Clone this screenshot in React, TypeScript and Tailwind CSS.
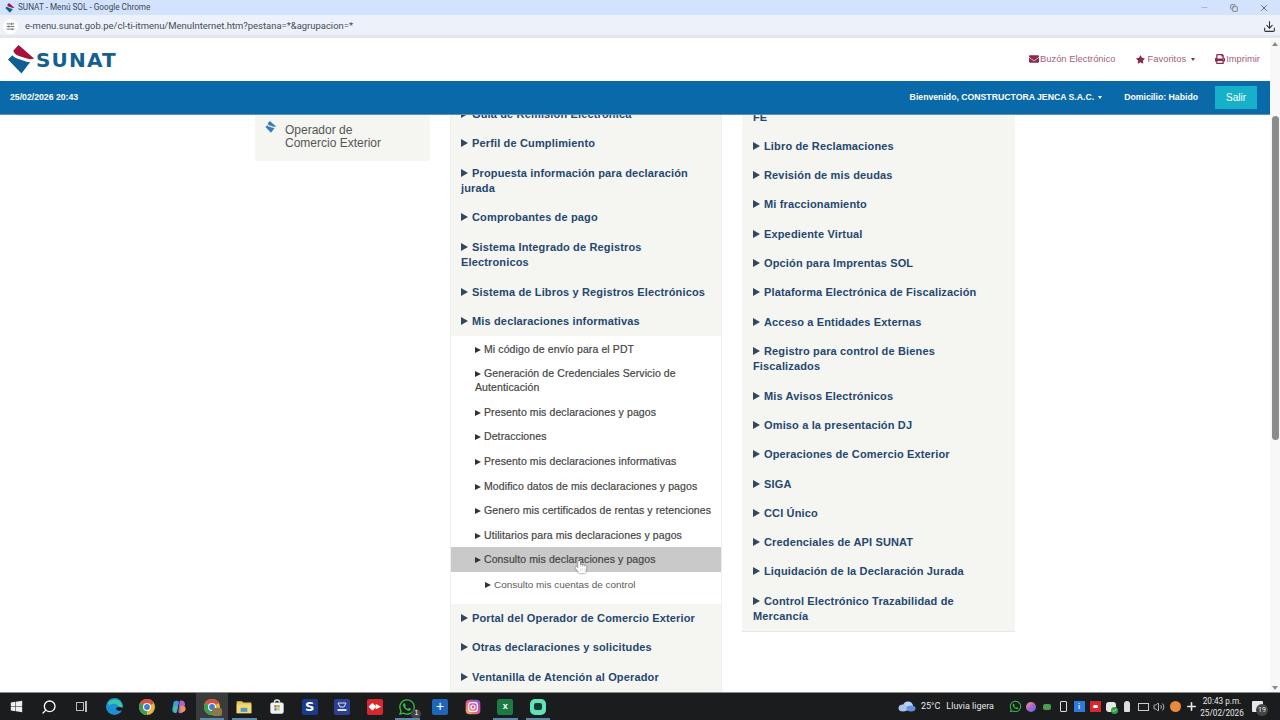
import { ReactNode } from "react";
import { FaWindows, FaWhatsapp, FaEnvelope, FaStar, FaPrint, FaHandPointer } from "react-icons/fa";
import { Search, Download, X, Minus, Copy, SlidersHorizontal, Plus, Volume2, Check } from "lucide-react";

const middleTop = [
  "Perfil de Cumplimiento",
  "Propuesta información para declaración jurada",
  "Comprobantes de pago",
  "Sistema Integrado de Registros Electronicos",
  "Sistema de Libros y Registros Electrónicos",
];

const subItems = [
  "Mi código de envío para el PDT",
  "Generación de Credenciales Servicio de Autenticación",
  "Presento mis declaraciones y pagos",
  "Detracciones",
  "Presento mis declaraciones informativas",
  "Modifico datos de mis declaraciones y pagos",
  "Genero mis certificados de rentas y retenciones",
  "Utilitarios para mis declaraciones y pagos",
];

const middleBottom = [
  "Portal del Operador de Comercio Exterior",
  "Otras declaraciones y solicitudes",
  "Ventanilla de Atención al Operador",
];

const rightItems = [
  "Libro de Reclamaciones",
  "Revisión de mis deudas",
  "Mi fraccionamiento",
  "Expediente Virtual",
  "Opción para Imprentas SOL",
  "Plataforma Electrónica de Fiscalización",
  "Acceso a Entidades Externas",
  "Registro para control de Bienes Fiscalizados",
  "Mis Avisos Electrónicos",
  "Omiso a la presentación DJ",
  "Operaciones de Comercio Exterior",
  "SIGA",
  "CCI Único",
  "Credenciales de API SUNAT",
  "Liquidación de la Declaración Jurada",
  "Control Electrónico Trazabilidad de Mercancía",
];

function Logo({ size, top = "#a5123f", bottom = "#0f5f95" }: { size: number; top?: string; bottom?: string }) {
  return (
    <svg width={size} height={size} viewBox="0 0 28 30" className="shrink-0">
      <path d="M11 0 L27 14 C22 16 17 13 13 12 C10 11 7 10 5.5 6 Z" fill={top} />
      <path d="M0 15 L4.5 10.5 C6 13 10 14 14 15.5 C18 17 21 18 23 17.5 L14 29.5 Z" fill={bottom} />
    </svg>
  );
}

function ChromeIcon({ size = 16 }: { size?: number }) {
  return (
    <svg width={size} height={size} viewBox="0 0 24 24">
      <circle cx="12" cy="12" r="12" fill="#e5b63a" />
      <path d="M12 12 L1.6 6 A12 12 0 0 1 22.4 6 Z" fill="#d9503f" />
      <path d="M12 12 L1.6 6 A12 12 0 0 0 12 24 Z" fill="#3f9a52" />
      <circle cx="12" cy="12" r="6" fill="#fff" />
      <circle cx="12" cy="12" r="4.4" fill="#3f7fdc" />
    </svg>
  );
}

function EdgeIcon() {
  return (
    <svg width="17" height="17" viewBox="0 0 24 24">
      <circle cx="12" cy="12" r="12" fill="#1d8fd6" />
      <path d="M2 9 C5 0 20 -1 23 10 C24 13 22 14 20 14 C17 8 8 6 5 11 C3 7 2 8 2 9 Z" fill="#39c9a6" />
      <path d="M24 14 C20 12 15 12 14 15 C15 18 20 19 24 17 Z" fill="#1a1c1d" />
    </svg>
  );
}

function CopilotIcon() {
  return (
    <svg width="16" height="16" viewBox="0 0 24 24">
      <path d="M4 5 C6 2 11 2 12 5 L9 20 C6 23 1 20 2 15 Z" fill="#3d9be0" />
      <path d="M13 3 C17 1 21 4 21 8 L18 19 C16 22 12 22 11 20 Z" fill="#b45fd0" />
      <path d="M14 11 C18 9 22 11 22 15 C21 20 16 21 14 20 Z" fill="#ef8f5a" />
      <path d="M4 12 C6 9 9 10 10 12 L8 20 C5 21 3 18 4 12 Z" fill="#46c28a" />
    </svg>
  );
}

function FolderIcon() {
  return (
    <svg width="16" height="15" viewBox="0 0 24 22">
      <path d="M1 3 H9 L11 5 H23 V21 H1 Z" fill="#e8c65a" />
      <rect x="1" y="8" width="22" height="13" fill="#f3d878" />
      <rect x="7" y="13" width="10" height="6" fill="#4f9bc4" />
    </svg>
  );
}

function StoreIcon() {
  return (
    <svg width="16" height="17" viewBox="0 0 24 24">
      <path d="M8 6 C8 1 16 1 16 6" fill="none" stroke="#e8e8e8" strokeWidth="2" />
      <rect x="2" y="6" width="20" height="17" rx="3" fill="#f2f2f2" />
      <rect x="8" y="10" width="3.5" height="3.5" fill="#e2583e" />
      <rect x="12.5" y="10" width="3.5" height="3.5" fill="#7cb342" />
      <rect x="8" y="14.5" width="3.5" height="3.5" fill="#2f8fe0" />
      <rect x="12.5" y="14.5" width="3.5" height="3.5" fill="#f2b632" />
    </svg>
  );
}

function InstagramIcon() {
  return (
    <svg width="16" height="16" viewBox="0 0 24 24">
      <defs>
        <linearGradient id="ig" x1="0" y1="1" x2="1" y2="0">
          <stop offset="0" stopColor="#f5b84a" />
          <stop offset="0.5" stopColor="#e0559a" />
          <stop offset="1" stopColor="#7a5cd6" />
        </linearGradient>
      </defs>
      <rect x="1" y="1" width="22" height="22" rx="6" fill="url(#ig)" />
      <rect x="5.5" y="5.5" width="13" height="13" rx="3.5" fill="none" stroke="#fff" strokeWidth="1.8" />
      <circle cx="12" cy="12" r="3" fill="none" stroke="#fff" strokeWidth="1.8" />
    </svg>
  );
}

function Arrow({ small }: { small?: boolean }) {
  return (
    <span
      className={
        small
          ? "mr-[3px] inline-block h-0 w-0 border-y-[3.5px] border-l-[6px] border-y-transparent border-l-[#333]"
          : "mr-[4px] inline-block h-0 w-0 border-y-[4px] border-l-[7px] border-y-transparent border-l-[#33475f]"
      }
    />
  );
}

function MainRow({ label, active, right }: { label: string; active?: boolean; right?: boolean }) {
  return (
    <div className={`py-[6.85px] pr-[10px] text-[11px] leading-[15.6px] font-bold tracking-[0.15px] text-[#25476f] ${right ? "pl-[11px]" : "pl-[10px]"} ${active ? "bg-[#f5f6f2]" : ""}`}>
      <Arrow />
      {label}
    </div>
  );
}

function SubRow({ label, hover, deep }: { label: string; hover?: boolean; deep?: boolean }) {
  return (
    <div
      className={`relative leading-[14px] ${deep ? "pb-[4.3px] pl-[34px] pt-[6.3px] text-[9.95px] font-normal text-[#5a5a5a]" : "py-[5.3px] pl-[24px] text-[10.5px] font-medium tracking-[0.1px] text-[#454545]"} ${hover ? "bg-[#c9c9c9]" : ""}`}
      style={{ WebkitTextStroke: deep ? undefined : "0.2px #454545" }}
    >
      <Arrow small />
      {label}
      {hover ? <FaHandPointer size={12} className="absolute left-[124px] top-[14px] text-white drop-shadow-[0_0_1px_#555]" /> : null}
    </div>
  );
}

function TaskIcon({ children, active, running }: { children: ReactNode; active?: boolean; running?: boolean }) {
  return (
    <div className={`relative flex h-full w-[32.6px] items-center justify-center ${active ? "bg-[#3a3c3c]" : ""}`}>
      {children}
      {running ? <span className="absolute bottom-0 left-[4px] right-[4px] h-[2px] bg-[#5f87a8]" /> : null}
    </div>
  );
}

function Square({ bg, children, className = "" }: { bg: string; children?: ReactNode; className?: string }) {
  return (
    <span className={`flex h-[16px] w-[16px] items-center justify-center rounded-[2px] font-bold text-white ${className}`} style={{ background: bg }}>
      {children}
    </span>
  );
}

function Tray({ children }: { children: ReactNode }) {
  return <span className="flex w-[16px] items-center justify-center">{children}</span>;
}

export default function App() {
  return (
    <div className="flex h-[720px] w-[1280px] flex-col overflow-hidden bg-white font-['Liberation_Sans',Arial,sans-serif]">
      {/* chrome title bar */}
      <div className="flex h-[15px] shrink-0 items-center bg-[#d3e3fd] pl-[5px] pr-[1px] font-['Roboto',sans-serif] text-[8.2px] text-[#3f4650]">
        <Logo size={10} />
        <span className="ml-[3px]">SUNAT - Menú SOL - Google Chrome</span>
        <div className="ml-auto flex items-center text-[#555]">
          <span className="flex w-[30px] justify-center"><Minus size={9} className="text-[#aab]" /></span>
          <span className="flex w-[30px] justify-center"><Copy size={8} /></span>
          <span className="flex w-[30px] justify-center"><X size={10} /></span>
        </div>
      </div>
      {/* address bar */}
      <div className="flex h-[23px] shrink-0 items-center border-b-[3px] border-[#e3e6ea] bg-[#edf2fa] pl-[3px] pr-[4px] pt-[3px] font-['Roboto',sans-serif] text-[9.45px] text-[#444b55]">
        <span className="flex h-[15px] w-[15px] items-center justify-center rounded-full bg-white">
          <SlidersHorizontal size={9} />
        </span>
        <span className="ml-[7px]">e-menu.sunat.gob.pe/cl-ti-itmenu/MenuInternet.htm?pestana=*&amp;agrupacion=*</span>
        <Download size={13} className="ml-auto text-[#333]" />
      </div>

      <div className="flex min-h-0 flex-1">
        <div className="flex min-w-0 flex-1 flex-col">
          {/* sunat header */}
          <div className="flex h-[43px] shrink-0 items-center pl-[7px] pr-[10px]">
            <Logo size={29} />
            <span className="font-['DejaVu_Sans',sans-serif] text-[20px] font-bold tracking-[1.2px] text-[#14608f]">SUNAT</span>
            <div className="ml-auto flex items-center text-[9.4px] text-[#a4607f]">
              <FaEnvelope size={10} className="mr-[1px] text-[#8a2a50]" />
              <span>Buzón Electrónico</span>
              <FaStar size={9} className="ml-[20px] mr-[3px] text-[#8a2a50]" />
              <span>Favoritos</span>
              <span className="ml-[5px] h-0 w-0 border-x-[2.5px] border-t-[3px] border-x-transparent border-t-[#8a2a50]" />
              <FaPrint size={10} className="ml-[20px] mr-[1px] text-[#8a2a50]" />
              <span>Imprimir</span>
            </div>
          </div>
          {/* blue bar */}
          <div className="flex h-[34px] shrink-0 items-center border-b border-[#5b93b8] bg-[#0a69a9] pl-[10px] pr-[13px] text-[8.7px] font-bold text-white">
            <span>25/02/2026 20:43</span>
            <span className="ml-auto">Bienvenido, CONSTRUCTORA JENCA S.A.C.</span>
            <span className="ml-[4px] h-0 w-0 border-x-[2.5px] border-t-[3px] border-x-transparent border-t-white" />
            <span className="ml-[22px]">Domicilio: Habido</span>
            <span className="ml-[17px] flex h-[23px] w-[42px] items-center justify-center bg-[#17b0c9] text-[10px] font-normal">Salir</span>
          </div>
          {/* page content */}
          <div className="flex min-h-0 flex-1 items-start overflow-hidden pl-[255px]">
            <div className="flex h-[46px] w-[175px] shrink-0 bg-[#f5f6f2] pl-[10px] pt-[6px] text-[12px] leading-[13px] text-[#555]">
              <Logo size={12} top="#3b7cb5" bottom="#3b7cb5" />
              <span className="ml-[8px] mt-[3px]">
                Operador de
                <br />
                Comercio Exterior
              </span>
            </div>
            <div className="ml-[20px] w-[272px] shrink-0 border-x border-[#eeeeee] bg-[#f5f6f2]">
              <div className="-mt-[14.8px]">
                <MainRow label="Guía de Remisión Electrónica" />
                {middleTop.map((m) => (
                  <MainRow key={m} label={m} />
                ))}
                <MainRow label="Mis declaraciones informativas" active />
                <div className="bg-white pb-[8px]">
                  {subItems.map((s) => (
                    <SubRow key={s} label={s} />
                  ))}
                  <SubRow label="Consulto mis declaraciones y pagos" hover />
                  <SubRow label="Consulto mis cuentas de control" deep />
                </div>
                {middleBottom.map((m) => (
                  <MainRow key={m} label={m} />
                ))}
              </div>
            </div>
            <div className="ml-[20px] h-[517px] w-[273px] shrink-0 overflow-hidden border-b border-[#e6e6e6] bg-[#f5f6f2]">
              <div className="-mt-[4.6px]">
                <div className="px-[11px] pb-[6px] text-[11px] leading-[15.6px] font-bold text-[#25476f]">FE</div>
                {rightItems.map((r) => (
                  <MainRow key={r} label={r} right />
                ))}
              </div>
            </div>
          </div>
        </div>
        {/* scrollbar */}
        <div className="flex w-[10px] shrink-0 flex-col items-center bg-[#f8f8f8] pt-[4px]">
          <span className="h-0 w-0 border-x-[3px] border-b-[4px] border-x-transparent border-b-[#8a8a8a]" />
          <span className="mt-[70px] h-[324px] w-[7px] rounded-full bg-[#8b8b8b]" />
          <span className="mt-auto mb-[2px] h-0 w-0 border-x-[3px] border-t-[4px] border-x-transparent border-t-[#8a8a8a]" />
        </div>
      </div>

      {/* windows taskbar */}
      <div className="flex h-[28px] shrink-0 items-center border-t border-[#8a8a8a] bg-[#1a1c1d] text-white">
        <div className="flex h-full items-center">
          <TaskIcon><FaWindows size={13} className="text-[#eee]" /></TaskIcon>
          <TaskIcon><Search size={16} className="-scale-x-100" /></TaskIcon>
          <TaskIcon>
            <span className="flex items-center gap-[1px]">
              <span className="h-[9px] w-[8px] border border-[#bbb]" />
              <span className="h-[11px] w-[2px] bg-[#bbb]" />
            </span>
          </TaskIcon>
          <TaskIcon><EdgeIcon /></TaskIcon>
          <TaskIcon><ChromeIcon /></TaskIcon>
          <TaskIcon><CopilotIcon /></TaskIcon>
          <TaskIcon active running>
            <span className="relative">
              <ChromeIcon />
              <span className="absolute -bottom-[1px] -right-[2px] h-[8px] w-[10px] rounded-[2px] bg-[#8a7a4a]" />
            </span>
          </TaskIcon>
          <TaskIcon running><FolderIcon /></TaskIcon>
          <TaskIcon><StoreIcon /></TaskIcon>
          <TaskIcon><Square bg="#1c3a8c" className="font-['DejaVu_Sans',sans-serif] text-[13px]">S</Square></TaskIcon>
          <TaskIcon>
            <Square bg="#2c3f93">
              <svg width="10" height="10" viewBox="0 0 10 10">
                <path d="M1 1 H9 L7 5 H3 Z" fill="none" stroke="#d8e4f8" strokeWidth="1" />
                <rect x="0.5" y="7" width="9" height="2" fill="#d8e4f8" />
              </svg>
            </Square>
          </TaskIcon>
          <TaskIcon><Square bg="#d8282f" className="text-[9px]">◆▸</Square></TaskIcon>
          <TaskIcon running>
            <span className="relative">
              <FaWhatsapp size={18} className="text-[#35c04a]" />
              <span className="absolute -bottom-[3px] -right-[5px] flex h-[10px] w-[10px] items-center justify-center rounded-full bg-[#444] text-[7px]">1</span>
            </span>
          </TaskIcon>
          <TaskIcon><Square bg="#1f66b8" className="text-[14px] font-normal">+</Square></TaskIcon>
          <TaskIcon><InstagramIcon /></TaskIcon>
          <TaskIcon running>
            <Square bg="#1d7a45" className="text-[9px]">x</Square>
          </TaskIcon>
          <TaskIcon running>
            <span className="flex h-[16px] w-[16px] items-center justify-center rounded-[5px] bg-[#5fe3b8]">
              <span className="h-[7px] w-[8px] rounded-[2px] bg-[#173a30]" />
            </span>
          </TaskIcon>
        </div>
        <div className="ml-auto flex h-full items-center pr-[17px] font-['Roboto',sans-serif] text-[9px] text-[#e8e8e8]">
          <svg width="18" height="14" viewBox="0 0 18 14">
            <ellipse cx="10" cy="6" rx="5" ry="4.5" fill="#b9d2f5" />
            <ellipse cx="5" cy="8" rx="4.5" ry="3.5" fill="#a9c4ee" />
            <ellipse cx="13" cy="8.5" rx="4.5" ry="3" fill="#5f93df" />
          </svg>
          <span className="ml-[5px]">25°C</span>
          <span className="ml-[6px]">Lluvia ligera</span>
          <div className="ml-[13px] flex items-center">
            <Tray><FaWhatsapp size={13} className="text-[#35c04a]" /></Tray>
            <Tray><span className="h-[10px] w-[10px] rounded-full bg-gradient-to-br from-[#f0a040] via-[#b05fd0] to-[#4070e0]" /></Tray>
            <Tray><span className="h-[6px] w-[8px] rounded-[2px] bg-[#4f9a50]" /></Tray>
            <Tray><span className="h-[11px] w-[7px] rounded-[1px] border border-[#ddd]" /></Tray>
            <Tray><span className="flex h-[11px] w-[11px] items-center justify-center bg-[#2c7ae0] text-[8px] font-bold">i</span></Tray>
            <Tray><span className="flex h-[11px] w-[11px] items-center justify-center bg-[#d8282f]"><span className="h-[3px] w-[5px] rounded-full bg-white" /></span></Tray>
            <Tray>
              <span className="relative h-[10px] w-[10px] rounded-[3px] bg-[#e8e8e8]">
                <span className="absolute -bottom-[2px] -right-[2px] flex h-[7px] w-[7px] items-center justify-center rounded-full bg-[#2ea043]"><Check size={5} strokeWidth={4} /></span>
              </span>
            </Tray>
            <Tray><span className="h-[11px] w-[6px] rounded-t-[3px] rounded-b-[1px] bg-[#dedede]" /></Tray>
            <Tray><span className="h-[8px] w-[11px] border border-[#ccc]" /></Tray>
            <Tray><Volume2 size={12} className="text-[#bbb]" /></Tray>
            <Tray><span className="h-[11px] w-[11px] rounded-full bg-[#e88a3a]" /></Tray>
            <Tray><Plus size={13} strokeWidth={3} /></Tray>
          </div>
          <div className="ml-[3px] flex w-[40px] flex-col items-center text-[8.2px] leading-[12px]">
            <span>20:43 p.m.</span>
            <span>25/02/2026</span>
          </div>
          <div className="relative ml-[10px] h-[11px] w-[11px] rounded-[1px] bg-[#e8e8e8]">
            <span className="absolute -bottom-[4px] -right-[5px] flex h-[12px] w-[12px] items-center justify-center rounded-full bg-[#444] text-[7px]">19</span>
          </div>
        </div>
      </div>
    </div>
  );
}
